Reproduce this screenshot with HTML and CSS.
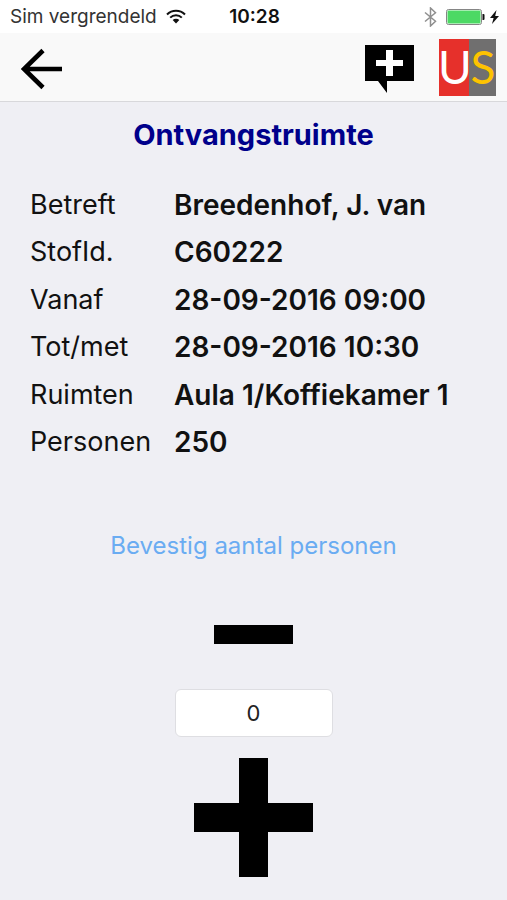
FILE: index.html
```html
<!DOCTYPE html>
<html lang="nl">
<head>
<meta charset="utf-8">
<meta name="viewport" content="width=device-width, initial-scale=1">
<title>Ontvangstruimte</title>
<link rel="stylesheet" href="styles.css">
</head>
<body>
<div class="status">
  <div class="status-left">
    <span>Sim vergrendeld</span>
    <svg width="20" height="15" viewBox="0 0 20 15" aria-hidden="true">
      <g fill="none" stroke="#111" stroke-width="2">
        <path d="M1 5.500a12.700 12.700 0 0 1 18 0"/>
        <path d="M4.200 8.600a8.200 8.200 0 0 1 11.600 0"/>
      </g>
      <path d="M6.700 11a4.700 4.700 0 0 1 6.600 0L10 14.500z" fill="#111"/>
    </svg>
  </div>
  <time class="clock">10:28</time>
  <div class="status-right">
    <svg width="13" height="20" viewBox="0 0 13 20" aria-hidden="true">
      <path d="M1 5.500l10.500 8.800L6.500 19V1l5 4.700L1 14.500" fill="none" stroke="#8f8f8f" stroke-width="1.500"/>
    </svg>
    <div class="battery">
      <svg width="39" height="16" viewBox="0 0 39 16" aria-hidden="true">
        <rect x="0.500" y="0.500" width="35" height="15" rx="2" fill="#fff" stroke="#858585"/>
        <rect x="1.500" y="1.500" width="33" height="13" rx="1" fill="#4cd964"/>
        <path d="M36.500 5h1q1 0 1 1v4q0 1-1 1h-1z" fill="#111"/>
      </svg>
      <svg width="9" height="14" viewBox="0 0 9 14" aria-hidden="true">
        <path d="M6.500 0L0 8h3.600L2 14l7-8H5.200z" fill="#111"/>
      </svg>
    </div>
  </div>
</div>
<header class="bar">
  <button class="icon-button" type="button" aria-label="Terug">
    <svg width="42" height="46" viewBox="0 -4 42 46">
      <path d="M41 21H3M22 2.500L3 21l19 18.500" fill="none" stroke="#000" stroke-width="4.600"/>
    </svg>
  </button>
  <div class="bar-actions">
    <button class="icon-button" type="button" aria-label="Nieuw bericht">
      <svg width="49" height="54" viewBox="0 -4 49 54">
        <path d="M0 1h49v36H22v12L13 37H0z" fill="#000"/>
        <path d="M21 6h7v10h10v6H28v10h-7V22H11v-6h10z" fill="#fff"/>
      </svg>
    </button>
    <svg class="logo" width="57" height="57" viewBox="0 0 57 57" role="img" aria-label="US">
      <rect width="57" height="57" fill="#e6302b"/>
      <rect x="30" width="27" height="57" fill="#706f6f"/>
      <text x="16" y="45" fill="#fff">U</text>
      <text x="44" y="45" fill="#fdc300">S</text>
    </svg>
  </div>
</header>
<main class="page">
  <h1>Ontvangstruimte</h1>
  <dl class="details">
    <dt>Betreft</dt><dd>Breedenhof, J. van</dd>
    <dt>StofId.</dt><dd>C60222</dd>
    <dt>Vanaf</dt><dd>28-09-2016 09:00</dd>
    <dt>Tot/met</dt><dd>28-09-2016 10:30</dd>
    <dt>Ruimten</dt><dd>Aula 1/Koffiekamer 1</dd>
    <dt>Personen</dt><dd>250</dd>
  </dl>
  <form class="counter">
    <label for="count">Bevestig aantal personen</label>
    <button class="icon-button" type="button" aria-label="Minder personen">
      <svg width="79" height="19" viewBox="0 0 79 19"><path d="M0 0h79v19H0z"/></svg>
    </button>
    <input id="count" type="text" inputmode="numeric" value="0">
    <button class="icon-button" type="button" aria-label="Meer personen">
      <svg width="119" height="119" viewBox="0 0 119 119"><path d="M45 0h29v45h45v29H74v45H45V74H0V45h45z"/></svg>
    </button>
  </form>
</main>
</body>
</html>
```
FILE: styles.css
```css
* {
  box-sizing: border-box;
}

body {
  margin: 0;
  min-height: 100vh;
  background: #efeff4;
  color: #111;
  font-family: Inter, "Liberation Sans", sans-serif;
}

svg {
  display: block;
  flex: none;
}

.status {
  display: grid;
  grid-template-columns: 1fr auto 1fr;
  align-items: center;
  height: 33px;
  padding: 0 8px 0 10px;
  background: #fff;
  font-size: 19px;
}

.status-left,
.status-right,
.battery {
  display: flex;
  align-items: center;
  gap: 9px;
  color: #333;
  white-space: nowrap;
}

.status-right {
  justify-content: flex-end;
}

.battery {
  gap: 5px;
}

.clock {
  font-weight: 600;
}

.bar {
  display: flex;
  align-items: center;
  justify-content: space-between;
  height: 69px;
  padding: 0 11px 0 21px;
  background: #f9f9f9;
  border-bottom: 1px solid #d8d8db;
}

.bar-actions {
  display: flex;
  align-items: center;
  gap: 25px;
}

.icon-button {
  padding: 0;
  border: 0;
  background: none;
  cursor: pointer;
}

.logo text {
  font-family: Lato, sans-serif;
  font-size: 46px;
  text-anchor: middle;
}

.page {
  padding: 16px 30px 24px;
}

h1 {
  margin: 0;
  color: #00008b;
  font-size: 29px;
  font-weight: 700;
  line-height: 34px;
  text-align: center;
}

.details {
  display: grid;
  grid-template-columns: 144px 1fr;
  grid-auto-rows: 1fr;
  align-items: center;
  min-height: 285px;
  margin: 29px 0 64px;
  font-size: 27px;
  line-height: 32px;
}

.details dd {
  margin: 0;
  font-size: 28px;
  font-weight: 600;
}

.counter {
  display: flex;
  flex-direction: column;
  align-items: center;
}

.counter label {
  margin-bottom: 63px;
  color: #6aacf2;
  font-size: 24px;
  line-height: 32px;
}

.counter input {
  width: 158px;
  height: 48px;
  margin: 45px 0 21px;
  border: 1px solid #dedee2;
  border-radius: 6px;
  background: #fff;
  color: #222;
  font: 22px Inter, "Liberation Sans", sans-serif;
  text-align: center;
}
```
